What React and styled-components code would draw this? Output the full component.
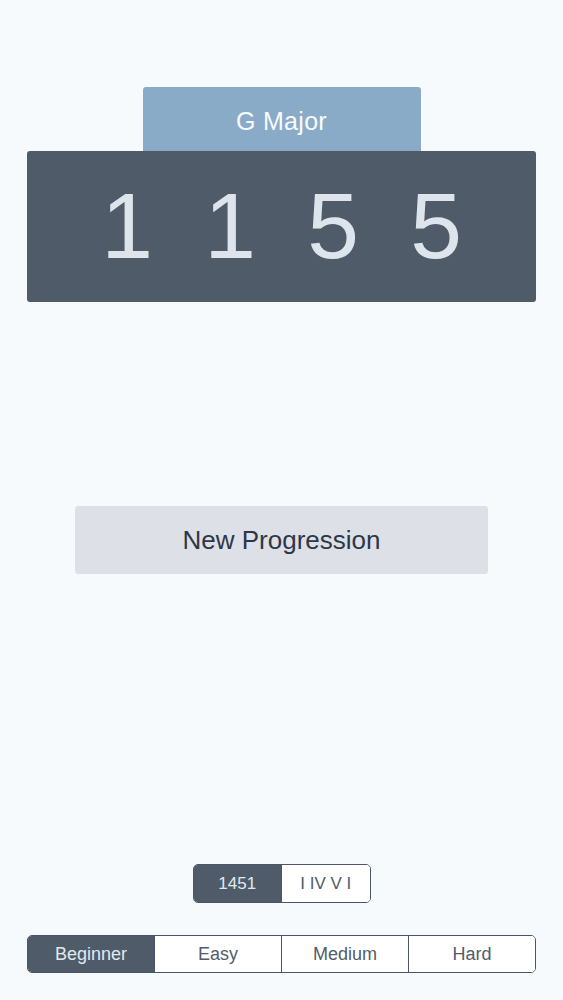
import React from "react";
import styled, { createGlobalStyle } from "styled-components";

const GlobalStyle = createGlobalStyle`
  html, body {
    margin: 0;
    padding: 0;
    background: #f7fafc;
  }
  body {
    font-family: "Liberation Sans", Arial, sans-serif;
  }
`;

const Page = styled.div`
  min-height: 1000px;
  display: flex;
  flex-direction: column;
  align-items: center;
  padding: 87px 27px 27px;
  box-sizing: border-box;
  background: #f7fafc;
`;

const KeyTab = styled.div`
  width: 278px;
  height: 64px;
  padding-top: 4px;
  box-sizing: border-box;
  background: #8aabc8;
  border-radius: 3px 3px 0 0;
  display: flex;
  align-items: center;
  justify-content: center;
  color: #f7fafc;
  font-size: 25px;
  letter-spacing: 0.3px;
`;

const Display = styled.div`
  align-self: stretch;
  height: 151px;
  background: #4f5b69;
  border-radius: 3px;
  display: flex;
  align-items: center;
  justify-content: center;
`;

const Degree = styled.span`
  width: 103px;
  text-align: center;
  color: #dde4ec;
  font-size: 93px;
  line-height: 1;
`;

const NewButton = styled.button`
  margin-top: 204px;
  width: 413px;
  height: 68px;
  border: none;
  border-radius: 3px;
  background: #dde0e6;
  color: #2d3748;
  font-family: inherit;
  font-size: 26px;
  cursor: pointer;
`;

const Spacer = styled.div`
  flex: 1;
`;

const Segmented = styled.div`
  display: flex;
  width: ${(p) => p.width}px;
  height: ${(p) => p.height}px;
  border: 1px solid #4a5568;
  border-radius: 5px;
  overflow: hidden;
  box-sizing: border-box;
  margin-top: ${(p) => p.top || 0}px;
`;

const Segment = styled.div`
  flex: 1;
  display: flex;
  align-items: center;
  justify-content: center;
  font-size: ${(p) => p.size}px;
  background: ${(p) => (p.active ? "#4f5b69" : "#ffffff")};
  color: ${(p) => (p.active ? "#e2e8f0" : "#525c6a")};
  & + & {
    border-left: 1px solid #4a5568;
  }
`;

export default function App() {
  const degrees = ["1", "1", "5", "5"];
  const levels = ["Beginner", "Easy", "Medium", "Hard"];
  return (
    <>
      <GlobalStyle />
      <Page>
        <KeyTab>G Major</KeyTab>
        <Display>
          {degrees.map((d, i) => (
            <Degree key={i}>{d}</Degree>
          ))}
        </Display>
        <NewButton>New Progression</NewButton>
        <Spacer />
        <Segmented width={178} height={39}>
          <Segment size={17} active>
            1451
          </Segment>
          <Segment size={17}>I IV V I</Segment>
        </Segmented>
        <Segmented width={509} height={38} top={32}>
          {levels.map((l, i) => (
            <Segment key={l} size={18} active={i === 0}>
              {l}
            </Segment>
          ))}
        </Segmented>
      </Page>
    </>
  );
}
